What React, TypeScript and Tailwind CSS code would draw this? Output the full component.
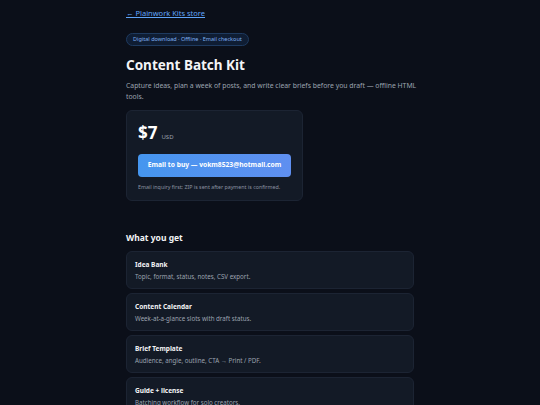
import React from 'react';

const items = [
  { title: 'Idea Bank', desc: 'Topic, format, status, notes, CSV export.' },
  { title: 'Content Calendar', desc: 'Week-at-a-glance slots with draft status.' },
  { title: 'Brief Template', desc: 'Audience, angle, outline, CTA → Print / PDF.' },
  { title: 'Guide + license', desc: 'Batching workflow for solo creators.' },
];

export default function App() {
  return (
    <div
      className="min-h-screen bg-[#0b0f19] text-[#e5e7eb] leading-none"
      style={{ fontFamily: '"Noto Sans", "Open Sans", sans-serif' }}
    >
      <div className="mx-auto w-[288px] pt-[8px] pb-10">
        <a href="#" className="block w-fit text-[7.5px] text-[#60a5fa] underline leading-[10px]">
          ← Plainwork Kits store
        </a>

        <div className="mt-[15px] flex w-fit items-center h-[13px] px-[6px] rounded-full border border-[#1e3a5f] bg-[#0f1d33] text-[5.5px] text-[#7fb0f0]">
          Digital download · Offline · Email checkout
        </div>

        <h1 className="mt-[9px] text-[13.5px] font-bold leading-[20px] text-[#f3f4f6]">Content Batch Kit</h1>

        <p className="mt-[5px] w-[300px] text-[6.85px] leading-[11px] text-[#9ca3af]">
          Capture ideas, plan a week of posts, and write clear briefs before you draft — offline HTML tools.
        </p>

        <div className="mt-[8px] w-[177px] rounded-[6px] border border-[#1c2433] bg-[#131a26] px-[11px] pt-[11px] pb-[9px]">
          <div className="flex items-baseline gap-[4px]">
            <span className="text-[17px] font-bold leading-[22px] text-white">$7</span>
            <span className="text-[6px] text-[#9ca3af]">USD</span>
          </div>
          <button className="mt-[10px] block w-full h-[23px] rounded-[4px] bg-gradient-to-r from-[#4596ef] to-[#5f8ff0] text-[6.7px] font-bold text-white">
            Email to buy — vokm8523@hotmail.com
          </button>
          <p className="mt-[6px] text-[5.3px] leading-[8px] text-[#8b93a1]">Email inquiry first; ZIP is sent after payment is confirmed.</p>
        </div>

        <h2 className="mt-[31px] text-[8.5px] font-bold leading-[12px] text-[#f3f4f6]">What you get</h2>

        <div className="mt-[7px] flex flex-col gap-[4px]">
          {items.map((item) => (
            <div key={item.title} className="h-[38px] rounded-[6px] border border-[#1c2433] bg-[#131a26] px-[8px] pt-[8px]">
              <p className="text-[6.5px] font-bold leading-[9px] text-[#f3f4f6]">{item.title}</p>
              <p className="mt-[4px] text-[6.2px] leading-[8px] text-[#9ca3af]">{item.desc}</p>
            </div>
          ))}
        </div>
      </div>
    </div>
  );
}
